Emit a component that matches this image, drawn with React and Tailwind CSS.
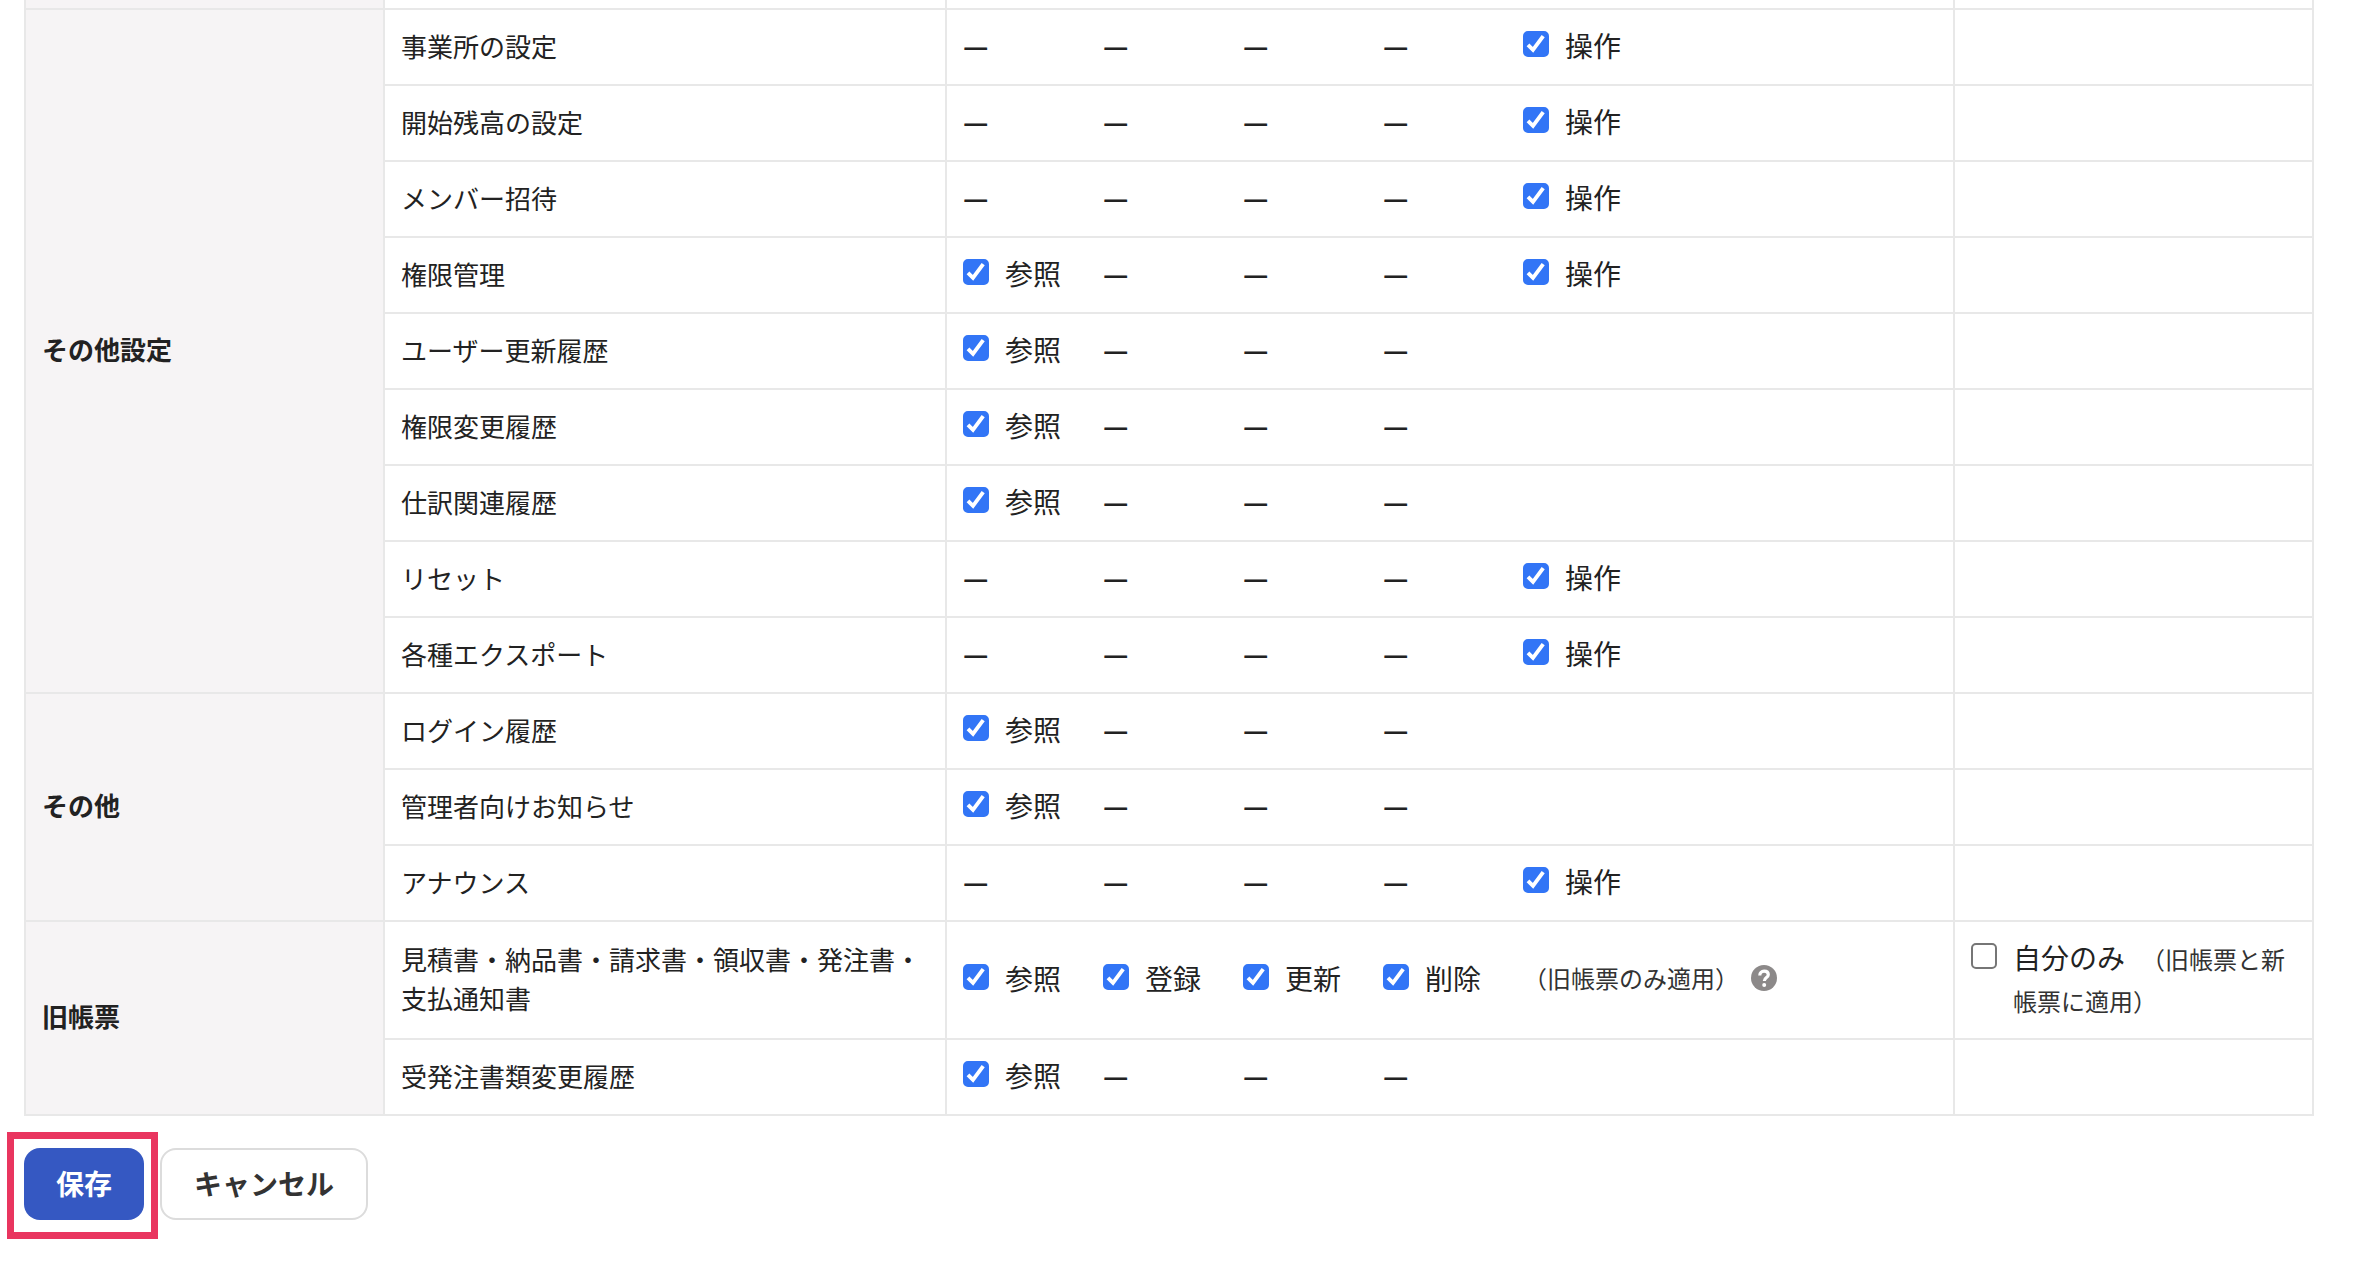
import React, { useState } from 'react';

const COLUMNS = ['参照', '登録', '更新', '削除', '操作'];

// 1 = checkbox, 0 = dash, null = blank
const GROUPS = [
  {
    title: 'その他設定',
    rows: [
      { name: '事業所の設定', cells: [0, 0, 0, 0, 1] },
      { name: '開始残高の設定', cells: [0, 0, 0, 0, 1] },
      { name: 'メンバー招待', cells: [0, 0, 0, 0, 1] },
      { name: '権限管理', cells: [1, 0, 0, 0, 1] },
      { name: 'ユーザー更新履歴', cells: [1, 0, 0, 0, null] },
      { name: '権限変更履歴', cells: [1, 0, 0, 0, null] },
      { name: '仕訳関連履歴', cells: [1, 0, 0, 0, null] },
      { name: 'リセット', cells: [0, 0, 0, 0, 1] },
      { name: '各種エクスポート', cells: [0, 0, 0, 0, 1] },
    ],
  },
  {
    title: 'その他',
    rows: [
      { name: 'ログイン履歴', cells: [1, 0, 0, 0, null] },
      { name: '管理者向けお知らせ', cells: [1, 0, 0, 0, null] },
      { name: 'アナウンス', cells: [0, 0, 0, 0, 1] },
    ],
  },
  {
    title: '旧帳票',
    rows: [
      {
        name: '見積書・納品書・請求書・領収書・発注書・支払通知書',
        cells: [1, 1, 1, 1, null],
        note: '（旧帳票のみ適用）',
        own: '（旧帳票と新帳票に適用）',
      },
      { name: '受発注書類変更履歴', cells: [1, 0, 0, 0, null] },
    ],
  },
];

const CheckField = ({ label, note, defaultChecked = false }) => {
  const [checked, setChecked] = useState(defaultChecked);

  return (
    <label className="flex items-start gap-4">
      <span className="relative mt-[7px] size-[26px] shrink-0">
        <input
          type="checkbox"
          checked={checked}
          onChange={(e) => setChecked(e.target.checked)}
          className="block size-[26px] appearance-none rounded-[5px] border-2 border-[#767676] bg-white checked:border-[#3275f6] checked:bg-[#3275f6]"
        />
        {checked && (
          <svg className="absolute inset-0 pointer-events-none" viewBox="0 0 26 26" fill="none" stroke="#fff" strokeWidth="3.9" aria-hidden="true">
            <path d="M5 13.8L10 18.8L20.2 5.2" />
          </svg>
        )}
      </span>
      <span>
        {label}
        {note && <span className="ml-4 text-2xl leading-none text-[#333]">{note}</span>}
      </span>
    </label>
  );
};

const HelpButton = () => (
  <button type="button" aria-label="ヘルプ" className="size-[26px] shrink-0 rounded-full">
    <svg viewBox="0 0 26 26" fill="none" aria-hidden="true">
      <circle cx="13" cy="13" r="13" fill="#8c8989" />
      <path d="M8.8 10.4C8.8 7.8 10.6 6.2 13.1 6.2C15.6 6.2 17.3 7.6 17.3 9.8C17.3 12.6 13.3 12.6 13.3 16" stroke="#fff" strokeWidth="3.2" />
      <circle cx="13.2" cy="20" r="2" fill="#fff" />
    </svg>
  </button>
);

const App = () => {
  return (
    <form
      onSubmit={(e) => e.preventDefault()}
      className="bg-white pl-6 pr-11 font-['Noto_Sans_CJK_JP',sans-serif] text-[28px] leading-[42px] text-[#222]"
    >
      <table className="w-full table-fixed border-collapse text-left">
        <colgroup>
          <col className="w-[359px]" />
          <col className="w-[562px]" />
          <col />
          <col className="w-[359px]" />
        </colgroup>

        <tbody>
          <tr className="h-[9px]">
            <th className="border-x-2 border-[#e8e8e8] bg-[#f6f4f5] p-0" />
            <td className="border-x-2 border-[#e8e8e8] p-0" />
            <td className="border-x-2 border-[#e8e8e8] p-0" />
            <td className="border-x-2 border-[#e8e8e8] p-0" />
          </tr>
        </tbody>

        {GROUPS.map((group) => (
          <tbody key={group.title}>
            {group.rows.map((row, i) => (
              <tr key={row.name}>
                {i === 0 && (
                  <th
                    scope="rowgroup"
                    rowSpan={group.rows.length}
                    className="border-2 border-[#e8e8e8] bg-[#f6f4f5] px-4 pt-[14px] pb-[18px] align-middle text-[26px] font-bold"
                  >
                    {group.title}
                  </th>
                )}
                <td className="border-2 border-[#e8e8e8] px-4 pt-[14px] pb-[18px] align-middle text-[26px] leading-[39px]">
                  {row.name}
                </td>
                <td className="border-2 border-[#e8e8e8] px-4 pt-[14px] pb-[18px] align-middle">
                  <div className="flex">
                    {row.cells.map((cell, n) => (
                      <div key={COLUMNS[n]} className={cell === null ? 'hidden' : 'w-[140px]'}>
                        {cell === 1 && <CheckField label={COLUMNS[n]} defaultChecked />}
                        {cell === 0 && <span className="font-bold">—</span>}
                      </div>
                    ))}
                    {row.note && (
                      <div className="flex items-center gap-3 text-2xl leading-[42px] text-[#333]">
                        {row.note}
                        <HelpButton />
                      </div>
                    )}
                  </div>
                </td>
                <td className="border-2 border-[#e8e8e8] px-4 pt-[14px] pb-[18px] align-top">
                  {row.own && <CheckField label="自分のみ" note={row.own} />}
                </td>
              </tr>
            ))}
          </tbody>
        ))}
      </table>

      {/* Actions */}
      <div className="flex gap-4 pt-8 pb-10 font-bold">
        <div className="relative">
          <button type="submit" className="h-[72px] rounded-2xl bg-[#3558c2] px-8 pb-0.5 text-white">
            保存
          </button>
          <span className="absolute -top-4 -bottom-[19px] -left-[17px] -right-[14px] border-7 border-[#e9355f] pointer-events-none" />
        </div>
        <button type="button" className="h-[72px] rounded-2xl border-2 border-[#dcdcdc] bg-white px-8 pb-0.5 text-[#333]">
          キャンセル
        </button>
      </div>
    </form>
  );
};

export default App;
